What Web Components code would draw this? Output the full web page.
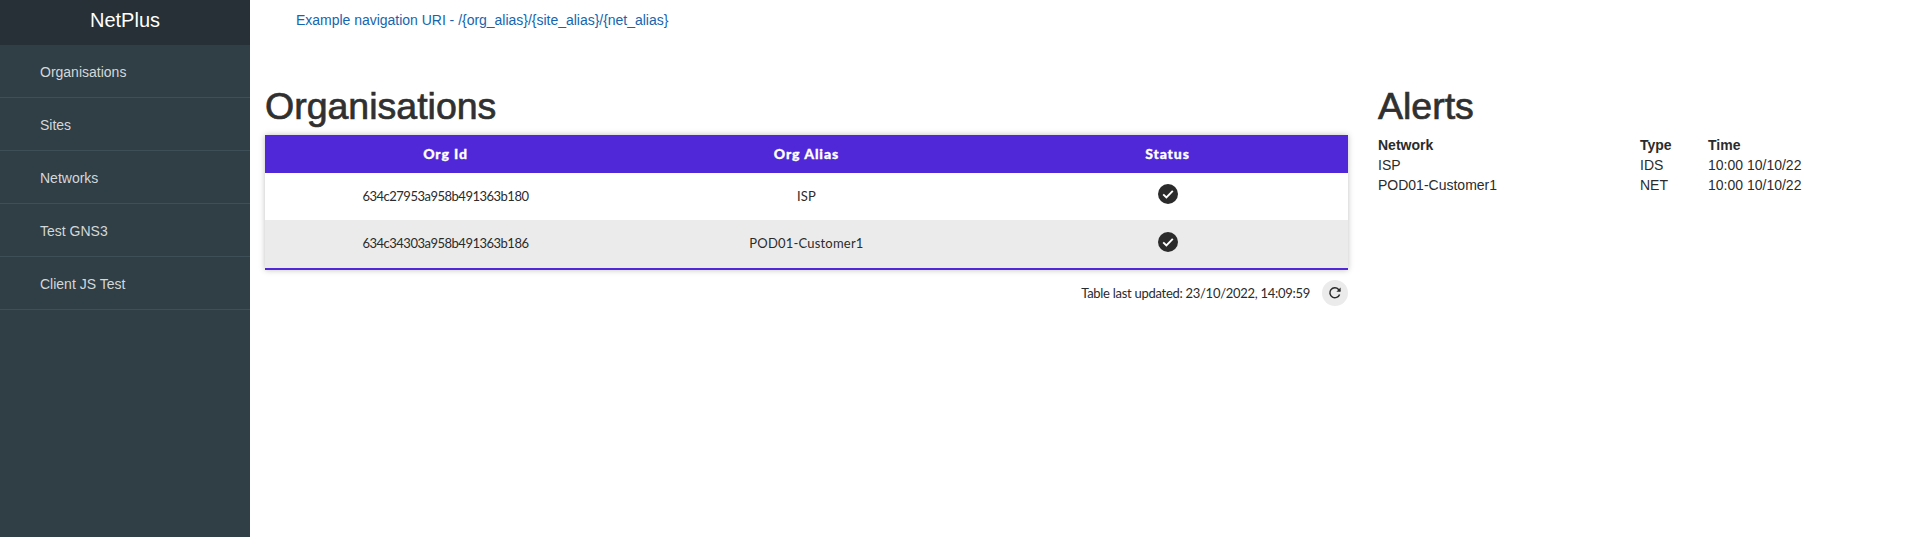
<!DOCTYPE html>
<html lang="en">
<head>
<meta charset="utf-8">
<title>NetPlus</title>
<style>
    html, body { margin: 0; height: 100%; background: #fff; }
    body { font-family: "Liberation Sans", Arial, sans-serif; overflow: hidden; }
</style>
</head>
<body>
<np-shell>
    <np-sidebar slot="side" brand="NetPlus">
        <np-nav-item>Organisations</np-nav-item>
        <np-nav-item>Sites</np-nav-item>
        <np-nav-item>Networks</np-nav-item>
        <np-nav-item>Test GNS3</np-nav-item>
        <np-nav-item>Client JS Test</np-nav-item>
    </np-sidebar>
    <np-uri-hint>Example navigation URI - /{org_alias}/{site_alias}/{net_alias}</np-uri-hint>
    <np-panels>
        <np-org-panel></np-org-panel>
        <np-alerts></np-alerts>
    </np-panels>
</np-shell>

<script>
class NpShell extends HTMLElement {
    connectedCallback() {
        this.attachShadow({ mode: 'open' });
        this.shadowRoot.innerHTML = `
            <style>
                :host { display: flex; height: 537px; }
                .side { flex: 0 0 250px; }
                .main { flex: 1; min-width: 0; }
            </style>
            <div class="side"><slot name="side"></slot></div>
            <div class="main"><slot></slot></div>
        `;
    }
}

class NpPanels extends HTMLElement {
    connectedCallback() {
        this.attachShadow({ mode: 'open' });
        this.shadowRoot.innerHTML = `
            <style>
                :host {
                    display: grid;
                    grid-template-columns: 1084px 1fr;
                    column-gap: 29px;
                    padding: 40px 0 0 15px;
                }
            </style>
            <slot></slot>
        `;
    }
}

class NpSidebar extends HTMLElement {
    connectedCallback() {
        this.attachShadow({ mode: 'open' });
        this.shadowRoot.innerHTML = `
            <style>
                :host { display: block; height: 537px; background: #303e45; }
                .brand {
                    height: 45px;
                    line-height: 40px;
                    text-align: center;
                    font-size: 20px;
                    color: #fff;
                    background: #263036;
                }
            </style>
            <div class="brand">${this.getAttribute('brand')}</div>
            <slot></slot>
        `;
    }
}

class NpNavItem extends HTMLElement {
    connectedCallback() {
        this.attachShadow({ mode: 'open' });
        this.shadowRoot.innerHTML = `
            <style>
                :host {
                    display: block;
                    height: 52px;
                    line-height: 54px;
                    padding-left: 40px;
                    font-size: 14px;
                    color: #d3d8da;
                    border-bottom: 1px solid #3f4f58;
                }
            </style>
            <slot></slot>
        `;
    }
}

class NpUriHint extends HTMLElement {
    connectedCallback() {
        this.attachShadow({ mode: 'open' });
        this.shadowRoot.innerHTML = `
            <style>
                :host {
                    display: block;
                    height: 40px;
                    line-height: 40px;
                    padding-left: 46px;
                    font-size: 14px;
                    letter-spacing: -0.02px;
                    color: #1565ae;
                }
            </style>
            <slot></slot>
        `;
    }
}

class NpOrgPanel extends HTMLElement {
    connectedCallback() {
        const rows = [
            ['634c27953a958b491363b180', 'ISP'],
            ['634c34303a958b491363b186', 'POD01-Customer1']
        ];
        const check = `<svg width="20" height="20" viewBox="0 0 20 20"><circle cx="10" cy="10" r="10" fill="#2b2b2b"/><path d="M5.2 10.4l3.2 3.1 6.4-6.6" fill="none" stroke="#fff" stroke-width="1.9"/></svg>`;
        this.attachShadow({ mode: 'open' });
        this.shadowRoot.innerHTML = `
            <style>
                :host { display: block; color: #2b2b2b; }
                h1 {
                    margin: 0;
                    height: 55px;
                    line-height: 53px;
                    font-size: 37.5px;
                    font-weight: 400;
                    color: #303030;
                    -webkit-text-stroke: 0.7px #303030;
                }
                table {
                    width: 1083px;
                    border-collapse: collapse;
                    font-family: Lato, sans-serif;
                    font-size: 13px;
                    box-shadow: 0 0 6px rgba(0, 0, 0, 0.25);
                    border-bottom: 2px solid #5028d8;
                }
                th {
                    height: 36px;
                    padding: 0 0 2px;
                    background: #5028d8;
                    color: #fff;
                    font-size: 14px;
                    font-weight: 900;
                    letter-spacing: 0.9px;
                    -webkit-text-stroke: 0.3px #fff;
                }
                td { height: 45px; padding: 0 0 2px; text-align: center; }
                tr.alt td { background: #ebebeb; height: 46px; }
                td.id { letter-spacing: -0.5px; }
                td.alias { letter-spacing: 0.2px; }
                td.state { padding-left: 2px; }
                td svg { display: block; margin: -3px auto 0; }
                .foot {
                    display: flex;
                    justify-content: flex-end;
                    align-items: center;
                    gap: 12px;
                    margin-top: 10px;
                    padding-right: 1px;
                    font-family: Lato, sans-serif;
                    font-size: 13px;
                    letter-spacing: -0.28px;
                }
                button {
                    width: 26px;
                    height: 26px;
                    padding: 0;
                    border: 0;
                    border-radius: 50%;
                    background: #ebebeb;
                    display: flex;
                    align-items: center;
                    justify-content: center;
                }
            </style>
            <h1>Organisations</h1>
            <table>
                <thead><tr><th style="width:33.33%">Org Id</th><th style="width:33.33%">Org Alias</th><th>Status</th></tr></thead>
                <tbody>
                    ${rows.map((r, i) => `<tr class="${i % 2 ? 'alt' : ''}"><td class="id">${r[0]}</td><td class="alias">${r[1]}</td><td class="state">${check}</td></tr>`).join('')}
                </tbody>
            </table>
            <div class="foot">
                <span>Table last updated: 23/10/2022, 14:09:59</span>
                <button aria-label="Refresh">
                    <svg width="14" height="14" viewBox="0 0 14 14"><path d="M11.6 8.4A5 5 0 1 1 10.6 3.4L12 5" fill="none" stroke="#2b2b2b" stroke-width="1.5"/><path d="M12.6 1.6v4.2H8.4z" fill="#2b2b2b"/></svg>
                </button>
            </div>
        `;
    }
}

class NpAlerts extends HTMLElement {
    connectedCallback() {
        const rows = [
            ['ISP', 'IDS', '10:00 10/10/22'],
            ['POD01-Customer1', 'NET', '10:00 10/10/22']
        ];
        this.attachShadow({ mode: 'open' });
        this.shadowRoot.innerHTML = `
            <style>
                :host { display: block; color: #2b2b2b; }
                h1 {
                    margin: 0;
                    height: 55px;
                    line-height: 53px;
                    font-size: 37.5px;
                    font-weight: 400;
                    color: #303030;
                    -webkit-text-stroke: 0.7px #303030;
                }
                .grid {
                    display: grid;
                    grid-template-columns: 262px 68px 1fr;
                    grid-auto-rows: 20px;
                    line-height: 20px;
                    font-size: 14px;
                }
                b { font-weight: 700; }
            </style>
            <h1>Alerts</h1>
            <div class="grid">
                <b>Network</b><b>Type</b><b>Time</b>
                ${rows.map(r => r.map(c => `<span>${c}</span>`).join('')).join('')}
            </div>
        `;
    }
}

customElements.define('np-shell', NpShell);
customElements.define('np-panels', NpPanels);
customElements.define('np-sidebar', NpSidebar);
customElements.define('np-nav-item', NpNavItem);
customElements.define('np-uri-hint', NpUriHint);
customElements.define('np-org-panel', NpOrgPanel);
customElements.define('np-alerts', NpAlerts);
</script>
</body>
</html>
